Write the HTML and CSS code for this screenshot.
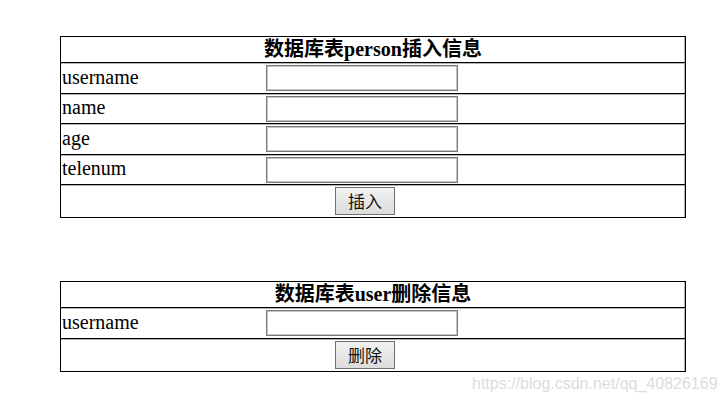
FILE: index.html
```html
<!DOCTYPE html>
<html lang="zh">
<head>
<meta charset="utf-8">
<title>数据库表操作</title>
<link rel="stylesheet" href="styles.css">
</head>
<body>
<div class="page">
  <form class="table">
    <div class="row head">数据库表person插入信息</div>
    <div class="row field"><span class="label">username</span><span class="cell"><input class="box" type="text"></span></div>
    <div class="row field short"><span class="label">name</span><span class="cell"><input class="box" type="text"></span></div>
    <div class="row field"><span class="label">age</span><span class="cell"><input class="box" type="text"></span></div>
    <div class="row field short"><span class="label">telenum</span><span class="cell"><input class="box" type="text"></span></div>
    <div class="row action"><button class="btn" type="button">插入</button></div>
  </form>

  <form class="table second">
    <div class="row head">数据库表user删除信息</div>
    <div class="row field"><span class="label">username</span><span class="cell"><input class="box" type="text"></span></div>
    <div class="row action"><button class="btn" type="button">删除</button></div>
  </form>
</div>
<div class="watermark">https://blog.csdn.net/qq_40826169</div>
</body>
</html>
```
FILE: styles.css
```css
html, body {
  margin: 0;
  padding: 0;
  background: #fff;
}
.page {
  padding: 36px 0 0 60px;
}
.table {
  width: 626px;
  box-sizing: border-box;
  border: 1px solid #000;
  box-shadow: inset -1px 0 0 #b4b4b4;
  display: flex;
  flex-direction: column;
  margin: 0;
  font-family: "Liberation Serif", "Noto Sans CJK SC", serif;
  font-size: 20px;
  color: #000;
}
.second {
  margin-top: 63px;
}
.row {
  display: flex;
  align-items: center;
  border-top: 1px solid #000;
  box-shadow: inset 0 1px 0 #b4b4b4;
}
.row.head {
  border-top: none;
  box-shadow: none;
  height: 25px;
  justify-content: center;
  font-weight: bold;
  line-height: 25px;
}
.row.field {
  height: 30px;
}
.row.field.short {
  height: 29px;
}
.label {
  width: 204px;
  padding-left: 1px;
  box-sizing: border-box;
  line-height: 24px;
  margin-top: -3px;
}
.cell {
  display: flex;
  align-items: center;
  padding-left: 1px;
}
.box {
  width: 192px;
  height: 26px;
  box-sizing: border-box;
  margin: 0;
  border: 1px solid #7a7a7a;
  box-shadow: inset 0 0 0 1px #c4c4c4;
  background: #fff;
  padding: 0 3px;
  font-size: 16px;
}
.row.action {
  height: 32px;
  justify-content: center;
}
.btn {
  width: 60px;
  height: 28px;
  margin: 0 16px 0 0;
  padding: 0;
  border: 1px solid #707070;
  border-radius: 0;
  background: linear-gradient(#f2f2f2, #dcdcdc);
  font-family: "Noto Sans CJK SC", sans-serif;
  font-size: 17px;
  line-height: 26px;
  color: #111;
}
.watermark {
  position: absolute;
  left: 472px;
  top: 375px;
  font-family: "Liberation Sans", Arial, sans-serif;
  font-size: 16px;
  line-height: 18px;
  color: #dcdcdc;
  white-space: nowrap;
}
```
